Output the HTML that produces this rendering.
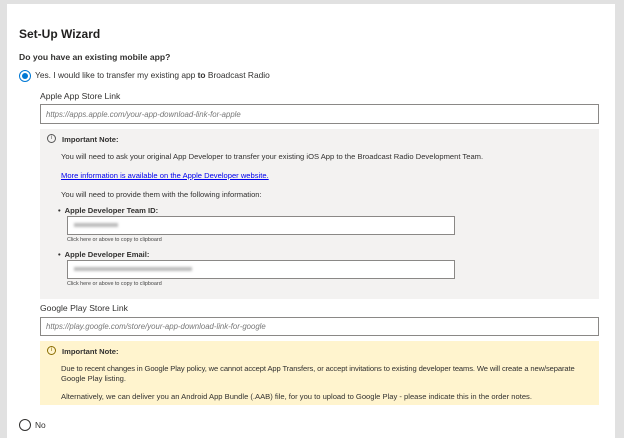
<!DOCTYPE html>
<html><head><meta charset="utf-8"><style>
*{margin:0;padding:0;box-sizing:border-box}
body{width:624px;height:438px;background:#e1e1e1;font-family:"Liberation Sans",sans-serif;color:#323130;position:relative;overflow:hidden}
.panel{position:absolute;left:7px;top:4px;width:608px;height:434px;background:#fff}
.a{position:absolute;white-space:nowrap}
.inp{position:absolute;border:1px solid #8a8886;background:#fff;font-style:italic;color:#777;font-size:7.8px;padding-left:5px;display:flex;align-items:center}
.box{position:absolute}
.icon{position:absolute;width:9px;height:9px;border:1px solid #555;border-radius:50%;font-size:6px;line-height:7px;text-align:center;color:#555}
.s{font-size:7.6px}
.cap{font-size:5.4px;color:#444}
.blur{position:absolute;height:4px;background:#bbb;filter:blur(1.2px)}
</style></head><body>
<div class="panel"></div>
<div class="a" style="left:19px;top:27px;font-size:12px;font-weight:bold;color:#201f1e">Set-Up Wizard</div>
<div class="a" style="left:19px;top:52px;font-size:8.6px;font-weight:bold">Do you have an existing mobile app?</div>
<div style="position:absolute;left:19px;top:70px;width:12px;height:12px;border:1px solid #0078d4;border-radius:50%"><div style="position:absolute;left:2px;top:2px;width:6px;height:6px;border-radius:50%;background:#0078d4"></div></div>
<div class="a" style="left:35px;top:70px;font-size:8.4px">Yes. I would like to transfer my existing app <b>to</b> Broadcast Radio</div>
<div class="a" style="left:40px;top:91px;font-size:8.6px">Apple App Store Link</div>
<div class="inp" style="left:40px;top:104px;width:559px;height:20px">https://apps.apple.com/your-app-download-link-for-apple</div>
<div class="box" style="left:40px;top:129px;width:559px;height:170px;background:#f3f2f1"></div>
<div class="icon" style="left:47px;top:134px">i</div>
<div class="a s" style="left:62px;top:135px;font-weight:bold">Important Note:</div>
<div class="a s" style="left:61px;top:152px">You will need to ask your original App Developer to transfer your existing iOS App to the Broadcast Radio Development Team.</div>
<div class="a s" style="left:61px;top:171px;color:#0000ee;text-decoration:underline">More information is available on the Apple Developer website.</div>
<div class="a s" style="left:61px;top:190px">You will need to provide them with the following information:</div>
<div class="a s" style="left:58px;top:206px;font-weight:bold">•&nbsp; Apple Developer Team ID:</div>
<div class="inp" style="left:67px;top:216px;width:388px;height:19px"></div>
<div class="blur" style="left:74px;top:223px;width:44px"></div>
<div class="a cap" style="left:67px;top:237px">Click here or above to copy to clipboard</div>
<div class="a s" style="left:58px;top:250px;font-weight:bold">•&nbsp; Apple Developer Email:</div>
<div class="inp" style="left:67px;top:260px;width:388px;height:19px"></div>
<div class="blur" style="left:74px;top:267px;width:118px"></div>
<div class="a cap" style="left:67px;top:281px">Click here or above to copy to clipboard</div>
<div class="a" style="left:40px;top:303px;font-size:8.6px">Google Play Store Link</div>
<div class="inp" style="left:40px;top:317px;width:559px;height:19px">https://play.google.com/store/your-app-download-link-for-google</div>
<div class="box" style="left:40px;top:341px;width:559px;height:64px;background:#fff4ce"></div>
<div class="icon" style="left:47px;top:346px;border-color:#8a6d00;color:#8a6d00">i</div>
<div class="a s" style="left:62px;top:347px;font-weight:bold">Important Note:</div>
<div class="a s" style="left:61px;top:364px;letter-spacing:-0.12px">Due to recent changes in Google Play policy, we cannot accept App Transfers, or accept invitations to existing developer teams. We will create a new/separate</div>
<div class="a s" style="left:61px;top:374px">Google Play listing.</div>
<div class="a s" style="left:61px;top:392px">Alternatively, we can deliver you an Android App Bundle (.AAB) file, for you to upload to Google Play - please indicate this in the order notes.</div>
<div style="position:absolute;left:19px;top:419px;width:12px;height:12px;border:1px solid #323130;border-radius:50%"></div>
<div class="a" style="left:35px;top:420px;font-size:8.4px">No</div>
</body></html>
